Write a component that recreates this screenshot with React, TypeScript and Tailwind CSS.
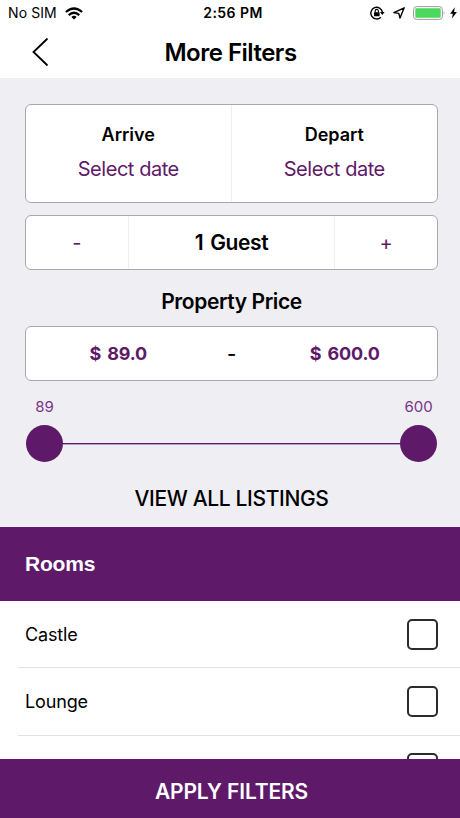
import { useState } from "react";

const rooms = ["Castle", "Lounge", ""];

function StatusBar() {
    return (
        <div className="grid h-[26px] grid-cols-3 items-center pl-2 pr-[3px] text-[14px] leading-[26px]">
            <div className="flex items-center gap-2">
                <span className="tracking-[0.1px]">No SIM</span>
                <svg width="18" height="13" viewBox="0 0 18 13" fill="none" stroke="#000" strokeWidth="2.3">
                    <path d="M0.9 5 Q9 -2 17.1 5" />
                    <path d="M3.7 8.1 Q9 3.5 14.3 8.1" />
                    <path d="M9 12.6 L6.3 9.9 Q9 7.8 11.7 9.9 Z" fill="#000" stroke="none" />
                </svg>
            </div>

            <span className="pl-px text-center font-semibold tracking-[0.45px] whitespace-nowrap">2:56 PM</span>

            <div className="flex items-center justify-end">
                <svg className="mr-[8px]" width="15" height="14" viewBox="0 0 15 14" fill="none" stroke="#000" strokeWidth="1.4">
                    <path d="M10.8 11.2 A5.8 5.8 0 1 1 12.4 6.2" />
                    <path d="M10 6.1 H14.6 L12.3 9 Z" fill="#000" stroke="none" />
                    <rect x="4" y="6.2" width="5.6" height="4" rx="0.4" fill="#000" stroke="none" />
                    <path d="M5.2 6.5 V5 A1.6 1.6 0 0 1 8.4 5 V6.5" strokeWidth="1.1" />
                </svg>
                <svg className="mr-2" width="12" height="12" viewBox="0 0 12 12" fill="none" stroke="#000" strokeWidth="1.4" strokeLinejoin="round">
                    <path d="M11.2 0.8 L7 11 L5.8 6.4 L0.9 5.6 Z" />
                </svg>
                <svg className="mr-1" width="33" height="14" viewBox="0 0 33 14">
                    <rect x="0.6" y="0.6" width="28.8" height="12.8" rx="3" fill="#fff" stroke="#9b9b9b" />
                    <rect x="2.3" y="2.3" width="25.4" height="9.4" rx="1" fill="#4cd75f" />
                    <path d="M30.7 5 Q32.4 7 30.7 9 Z" fill="#9b9b9b" />
                </svg>
                <svg width="7" height="12" viewBox="0 0 7 12">
                    <path d="M4.8 0.3 L0.1 6.8 H2.8 L2 11.6 L6.9 4.9 H4.1 Z" fill="#000" />
                </svg>
            </div>
        </div>
    );
}

function Thumb({ value }: { value: number }) {
    return (
        <div className="flex w-[37px] flex-col items-center">
            <span className="text-[15px] leading-[18px] text-[#77358a]">{value}</span>
            <span className="mt-[9px] size-[37px] rounded-full bg-[#5e1968]"></span>
        </div>
    );
}

export default function App() {
    const [ guests, setGuests ] = useState(1);
    const [ selected, setSelected ] = useState<number[]>([]);

    function toggleRoom(index: number) {
        setSelected(selected.includes(index) ? selected.filter((i) => i !== index) : [...selected, index]);
    }

    return (
        <div className="flex h-[818px] w-full flex-col overflow-hidden bg-white font-['Inter',sans-serif] text-black">
            <header className="h-[78px] shrink-0">
                <StatusBar />

                <div className="grid h-[52px] grid-cols-[32px_1fr_32px] items-center px-[25px]">
                    <button aria-label="Back" className="cursor-pointer pl-[7px]">
                        <svg width="18" height="30" viewBox="0 0 18 30" fill="none" stroke="#000" strokeWidth="1.8" strokeLinecap="round">
                            <path d="M15 2 L1.5 15 L15 28" />
                        </svg>
                    </button>
                    <h1 className="pt-px pl-px text-center text-[24px] font-semibold tracking-[-0.5px]">More Filters</h1>
                </div>
            </header>

            <section className="flex h-[449px] shrink-0 flex-col bg-[#efeef3] pt-[26px] pr-[22px] pl-[25px]">
                <div className="grid h-[99px] grid-cols-2 rounded-md border border-[#a9a9ad] bg-white text-center">
                    {["Arrive", "Depart"].map((label, i) => (
                        <div key={label} className={i === 0 ? "border-r border-[#efeef2] pt-[17px]" : "pt-[17px]"}>
                            <p className="text-[18px] leading-[26px] font-semibold">{label}</p>
                            <button className="mt-[7px] block w-full cursor-pointer text-[20px] leading-[28px] tracking-[-0.45px] text-[#5e1968]">Select date</button>
                        </div>
                    ))}
                </div>

                <div className="mt-3 grid h-[55px] grid-cols-4 items-stretch rounded-md border border-[#a9a9ad] bg-white text-center">
                    <button className="cursor-pointer border-r border-[#efeef2] text-[20px] text-[#5e1968]" onClick={() => setGuests(Math.max(1, guests - 1))}>-</button>
                    <p className="col-span-2 text-[21px] leading-[53px] font-semibold tracking-[-0.35px] [word-spacing:2px]">{guests} Guest</p>
                    <button className="cursor-pointer border-l border-[#efeef2] text-[20px] text-[#5e1968]" onClick={() => setGuests(guests + 1)}>+</button>
                </div>

                <h2 className="mt-[18px] text-center text-[21px] leading-[28px] font-semibold tracking-[-0.4px]">Property Price</h2>

                <div className="mt-[10px] grid h-[55px] grid-cols-[1fr_42px_1fr] items-center rounded-md border border-[#a9a9ad] bg-white text-center text-[18px] font-bold text-[#5e1968]">
                    <span className="tracking-[-0.15px] [word-spacing:2px]">$ 89.0</span>
                    <span className="text-[20px] font-medium text-black">-</span>
                    <span className="tracking-[-0.15px] [word-spacing:2px]">$ 600.0</span>
                </div>

                <div className="mt-[17px] flex items-end px-px">
                    <Thumb value={89} />
                    <span className="mb-[17px] h-0.5 flex-1 border-b border-[#b79dbf] bg-[#5e1968]"></span>
                    <Thumb value={600} />
                </div>

                <button className="mt-[23px] cursor-pointer text-center text-[21px] leading-[28px] font-medium tracking-[-0.35px]">VIEW ALL LISTINGS</button>
            </section>

            <h2 className="h-[74px] shrink-0 bg-[#5e1968] px-[25px] font-['Liberation_Sans',sans-serif] text-[21px] leading-[74px] font-bold tracking-[-0.2px] text-white">Rooms</h2>

            <ul className="min-h-0 flex-1 overflow-hidden pl-[18px]">
                {rooms.map((room, i) => (
                    <li key={i} className="flex h-[67.3px] items-center justify-between border-b border-[#e2e2e2] pr-[22px] pl-[7px] text-[18px] tracking-[-0.15px]">
                        <span>{room}</span>
                        <button
                            aria-label={room || "Room"}
                            onClick={() => toggleRoom(i)}
                            className={`size-[31px] cursor-pointer rounded-[5px] border-2 border-[#2b2b2b] ${selected.includes(i) ? "bg-[#5e1968]" : "bg-white"}`}
                        ></button>
                    </li>
                ))}
            </ul>

            <button className="h-[59.5px] shrink-0 cursor-pointer bg-[#5e1968] pt-[6px] pl-[3px] text-[21px] font-semibold tracking-[-0.15px] text-white">APPLY FILTERS</button>
        </div>
    );
}
